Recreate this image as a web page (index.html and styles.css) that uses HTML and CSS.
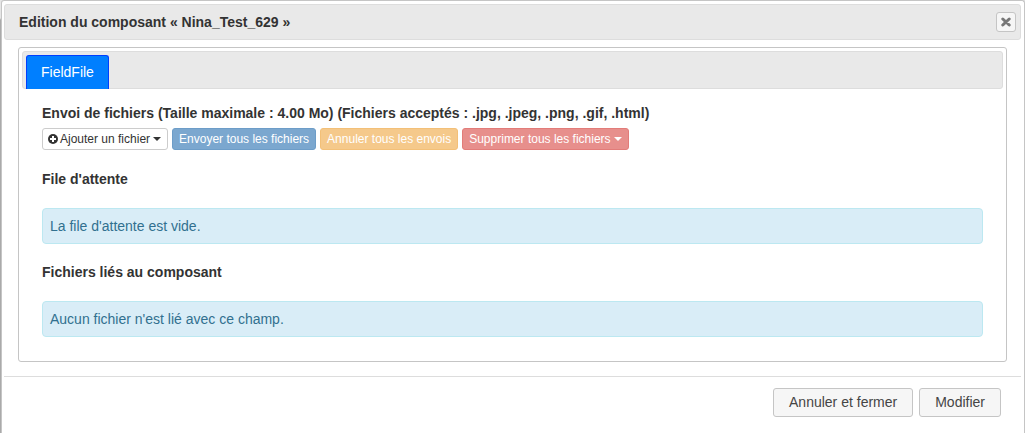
FILE: index.html
```html
<!DOCTYPE html>
<html lang="fr">
<head>
<meta charset="utf-8">
<title>Edition du composant</title>
<link rel="stylesheet" href="styles.css">
</head>
<body>
<div class="dialog" role="dialog" aria-labelledby="dialog-title">
  <header class="dialog-header">
    <h1 class="dialog-title" id="dialog-title">Edition du composant « Nina_Test_629 »</h1>
    <button class="close" type="button" aria-label="Fermer">
      <svg class="close-icon" viewBox="0 0 10 10" aria-hidden="true"><path d="M1.8 2 8.2 8M8.2 2 1.8 8"/></svg>
    </button>
  </header>
  <main class="dialog-content">
    <section class="tabs">
      <nav class="tab-bar"><a class="tab" href="#fieldfile">FieldFile</a></nav>
      <div class="panel" id="fieldfile">
        <h2 class="heading">Envoi de fichiers (Taille maximale : 4.00 Mo) (Fichiers acceptés : .jpg, .jpeg, .png, .gif, .html)</h2>
        <div class="toolbar">
          <button class="btn btn-default" type="button">
            <svg class="plus-icon" viewBox="0 0 10 10" aria-hidden="true"><circle cx="5" cy="5" r="5"/><path d="M5 2v6M2 5h6"/></svg>
            <span>Ajouter un fichier</span><span class="caret"></span>
          </button>
          <button class="btn btn-primary" type="button">Envoyer tous les fichiers</button>
          <button class="btn btn-warning" type="button">Annuler tous les envois</button>
          <button class="btn btn-danger" type="button"><span>Supprimer tous les fichiers</span><span class="caret"></span></button>
        </div>
        <h2 class="heading">File d'attente</h2>
        <p class="alert">La file d'attente est vide.</p>
        <h2 class="heading">Fichiers liés au composant</h2>
        <p class="alert">Aucun fichier n'est lié avec ce champ.</p>
      </div>
    </section>
  </main>
  <footer class="dialog-footer">
    <button class="action" type="button">Annuler et fermer</button>
    <button class="action" type="button">Modifier</button>
  </footer>
</div>
</body>
</html>
```

FILE: styles.css
```css
* {
  box-sizing: border-box;
}

body {
  margin: 0;
  padding-left: 1px;
  background: linear-gradient(#e6e6e6 18px, #aaaaaa 20px);
  color: #333333;
  font-family: "Liberation Sans", Arial, sans-serif;
  font-size: 14px;
  line-height: 20px;
}

button {
  font-family: inherit;
  cursor: pointer;
}

.dialog {
  display: flex;
  flex-direction: column;
  min-height: 100vh;
  padding: 3px 3px 0 2px;
  border: 1px solid #c5c5c5;
  border-bottom: 0;
  border-radius: 3px 3px 0 0;
  background: #ffffff;
}

.dialog-header {
  display: flex;
  align-items: center;
  justify-content: space-between;
  padding: 7px 4px 7px 14px;
  border: 1px solid #dddddd;
  border-radius: 3px;
  background: #e9e9e9;
}

.dialog-title,
.heading {
  margin: 0;
  font-size: 14px;
  font-weight: bold;
  line-height: 20px;
}

.close {
  display: flex;
  align-items: center;
  justify-content: center;
  width: 20px;
  height: 20px;
  padding: 0;
  border: 1px solid #c5c5c5;
  border-radius: 3px;
  background: #f6f6f6;
}

.close-icon {
  width: 10px;
  height: 10px;
  fill: none;
  stroke: #777777;
  stroke-linecap: round;
  stroke-width: 3;
}

.dialog-content {
  padding: 7px 14px 14px;
}

.tabs {
  padding: 3px;
  border: 1px solid #c5c5c5;
  border-radius: 3px;
}

.tab-bar {
  display: flex;
  padding: 3px 3px 0;
  border: 1px solid #dddddd;
  border-radius: 3px;
  background: #e9e9e9;
}

.tab {
  margin-bottom: -1px;
  padding: 6px 14px 7px;
  border: 1px solid #003eff;
  border-bottom: 0;
  border-radius: 3px 3px 0 0;
  background: #007fff;
  color: #ffffff;
  text-decoration: none;
}

.panel {
  padding: 14px 20px 21px;
}

.toolbar {
  display: flex;
  flex-wrap: wrap;
  gap: 4px;
  margin: 5px 0 19px;
}

.btn {
  display: flex;
  align-items: center;
  gap: 2px;
  padding: 1px 6px;
  border: 1px solid;
  border-radius: 3px;
  color: #ffffff;
  font-size: 12px;
  line-height: 18px;
}

.btn-default {
  padding-left: 5px;
  border-color: #cccccc;
  background: #ffffff;
  color: #333333;
}

.btn-primary {
  border-color: #6d9dc8;
  background: #7ba7cf;
}

.btn-warning {
  border-color: #f3c078;
  background: #f5c98b;
}

.btn-danger {
  border-color: #e27c79;
  background: #e78f8c;
}

.plus-icon {
  width: 10px;
  height: 10px;
  fill: #333333;
  stroke: none;
}

.plus-icon path {
  stroke: #ffffff;
  stroke-width: 2;
}

.caret {
  margin-left: 1px;
  border-top: 4px solid;
  border-right: 4px solid transparent;
  border-left: 4px solid transparent;
}

.alert {
  margin: 19px 0 18px;
  padding: 7px;
  border: 1px solid #bce8f1;
  border-radius: 4px;
  background: #d9edf7;
  color: #31708f;
}

.alert:last-child {
  margin-bottom: 0;
}

.dialog-footer {
  display: flex;
  justify-content: flex-end;
  gap: 6px;
  padding: 11px 20px 16px;
  border-top: 1px solid #dddddd;
}

.action {
  padding: 3px 15px 4px;
  border: 1px solid #c5c5c5;
  border-radius: 3px;
  background: #f6f6f6;
  color: #454545;
  font-size: 14px;
  line-height: 20px;
}
```
